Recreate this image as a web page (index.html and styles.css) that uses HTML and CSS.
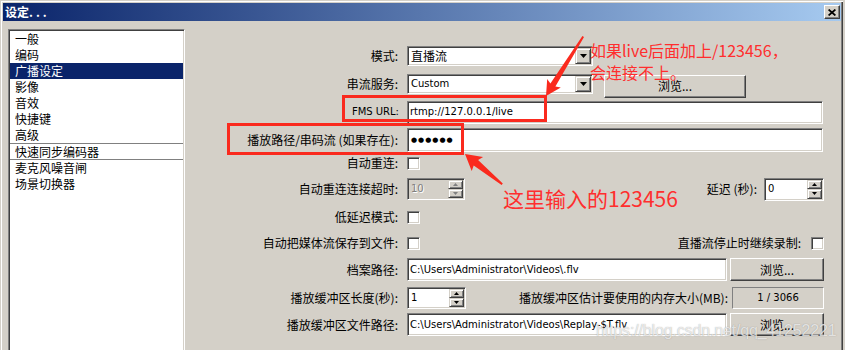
FILE: index.html
```html
<!DOCTYPE html>
<html lang="zh-CN">
<head>
<meta charset="utf-8">
<title>设定</title>
<link rel="stylesheet" href="styles.css">
</head>
<body>
<div class="window">
  <div class="titlebar">
    <span class="title">设定<span class="dots">...</span></span>
    <span class="close"><svg width="8" height="7" viewBox="0 0 8 7"><path d="M0.6 0.5 L7.4 6.5 M7.4 0.5 L0.6 6.5" stroke="#000" stroke-width="1.7"/></svg></span>
  </div>
  <div class="body">
    <div class="list">
      <div class="item">一般</div>
      <div class="item">编码</div>
      <div class="item sel">广播设定</div>
      <div class="item">影像</div>
      <div class="item">音效</div>
      <div class="item">快捷键</div>
      <div class="item">高级</div>
      <div class="item grp">快速同步编码器</div>
      <div class="item">麦克风噪音闸</div>
      <div class="item">场景切换器</div>
    </div>

    <div class="form">
      <div class="row h28">
        <div class="lbl">模式:</div>
        <div class="ctl">
          <div class="combo"><span class="cjk">直播流</span><span class="dd"><svg width="7" height="4" viewBox="0 0 7 4"><path d="M0 0h7L3.5 4z" fill="#000"/></svg></span></div>
        </div>
      </div>

      <div class="row h28">
        <div class="lbl">串流服务:</div>
        <div class="ctl">
          <div class="combo"><span class="lat">Custom</span><span class="dd"><svg width="7" height="4" viewBox="0 0 7 4"><path d="M0 0h7L3.5 4z" fill="#000"/></svg></span></div>
          <div class="btn btn-top w142">浏览...</div>
        </div>
      </div>

      <div class="row h28">
        <div class="lbl lat-lbl">FMS URL:</div>
        <div class="ctl">
          <div class="field w416"><span class="lat">rtmp://127.0.0.1/live</span></div>
        </div>
      </div>

      <div class="row h28">
        <div class="lbl">播放路径/串码流 (如果存在):</div>
        <div class="ctl">
          <div class="field w416 h24"><span class="pw">●●●●●●</span></div>
        </div>
      </div>

      <div class="row h18">
        <div class="lbl">自动重连:</div>
        <div class="ctl"><span class="cb"></span></div>
      </div>

      <div class="row h34">
        <div class="lbl">自动重连连接超时:</div>
        <div class="ctl">
          <div class="spin off w58"><span class="lat">10</span>
            <span class="sbs">
              <span class="sbtn"><svg width="5" height="3" viewBox="0 0 5 3"><path d="M0 3h5L2.5 0z" fill="#808080"/></svg></span>
              <span class="sbtn"><svg width="5" height="3" viewBox="0 0 5 3"><path d="M0 0h5L2.5 3z" fill="#808080"/></svg></span>
            </span>
          </div>
          <div class="lbl-r gap7">延迟 (秒):</div>
          <div class="spin w60 h23"><span class="lat">0</span>
            <span class="sbs">
              <span class="sbtn"><svg width="5" height="3" viewBox="0 0 5 3"><path d="M0 3h5L2.5 0z" fill="#000"/></svg></span>
              <span class="sbtn"><svg width="5" height="3" viewBox="0 0 5 3"><path d="M0 0h5L2.5 3z" fill="#000"/></svg></span>
            </span>
          </div>
        </div>
      </div>

      <div class="row h22">
        <div class="lbl">低延迟模式:</div>
        <div class="ctl"><span class="cb"></span></div>
      </div>

      <div class="row h30">
        <div class="lbl">自动把媒体流保存到文件:</div>
        <div class="ctl">
          <span class="cb"></span>
          <div class="lbl-r gap10">直播流停止时继续录制:</div>
          <span class="cb"></span>
        </div>
      </div>

      <div class="row h23">
        <div class="lbl">档案路径:</div>
        <div class="ctl">
          <div class="field w320"><span class="lat">C:\Users\Administrator\Videos\.flv</span></div>
          <div class="btn w94 ml3">浏览...</div>
        </div>
      </div>

      <div class="row h34">
        <div class="lbl">播放缓冲区长度(秒):</div>
        <div class="ctl">
          <div class="spin w59"><span class="lat">1</span>
            <span class="sbs">
              <span class="sbtn"><svg width="5" height="3" viewBox="0 0 5 3"><path d="M0 3h5L2.5 0z" fill="#000"/></svg></span>
              <span class="sbtn"><svg width="5" height="3" viewBox="0 0 5 3"><path d="M0 0h5L2.5 3z" fill="#000"/></svg></span>
            </span>
          </div>
          <div class="lbl-r gap4">播放缓冲区估计要使用的内存大小(MB):</div>
          <div class="memo"><span class="lat">1 / 3066</span></div>
        </div>
      </div>

      <div class="row h19">
        <div class="lbl">播放缓冲区文件路径:</div>
        <div class="ctl">
          <div class="field w320"><span class="lat">C:\Users\Administrator\Videos\Replay-$T.flv</span></div>
          <div class="btn w94 ml3">浏览...</div>
        </div>
      </div>
    </div>
  </div>
</div>

<svg class="marks" width="845" height="350" viewBox="0 0 845 350">
  <rect x="343.5" y="96.5" width="202" height="24" fill="none" stroke="#fa2a1e" stroke-width="3"/>
  <rect x="228.5" y="124.5" width="234" height="29" fill="none" stroke="#fa2a1e" stroke-width="3"/>
  <polygon fill="#fa2a1e" points="582.4,36.1 584.0,37.1 555.4,86.6 560.8,87.6 546,96 547.2,79.0 550.4,83.4"/>
  <polygon fill="#fa2a1e" points="501.6,185.1 502.8,183.5 478.1,160.1 483.1,157.1 465,154 471.7,171.1 473.7,165.5"/>
</svg>
<div class="note n1">如果live后面加上/123456，<br>会连接不上。</div>
<div class="note n2">这里输入的123456</div>
<div class="wm">https://blog.csdn.net/qq_41252221</div>
</body>
</html>
```

FILE: styles.css
```css
html, body {
  margin: 0;
  padding: 0;
  width: 845px;
  height: 350px;
  overflow: hidden;
  background: #d4d0c8;
}
body {
  position: relative;
  font-family: "Noto Sans CJK SC", sans-serif;
  font-size: 12px;
  line-height: 14px;
  color: #000;
}

.window {
  width: 843px;
  height: 350px;
  box-sizing: border-box;
  padding: 3px 2px 0 3px;
  background: #d4d0c8;
  box-shadow: inset 1px 1px 0 #d4d0c8, inset 2px 2px 0 #fff, inset -1px 0 0 #404040, inset -2px 0 0 #808080;
  display: flex;
  flex-direction: column;
}

.titlebar {
  height: 18px;
  flex: none;
  background: linear-gradient(to right, #0a246a, #a6caf0);
  display: flex;
  align-items: center;
  justify-content: space-between;
}
.title {
  color: #fff;
  font-weight: bold;
  padding-left: 2px;
  line-height: 18px;
}
.dots { letter-spacing: 3px; }
.close {
  width: 16px;
  height: 14px;
  box-sizing: border-box;
  margin-right: 1px;
  background: #d4d0c8;
  border: 1px solid;
  border-color: #fff #404040 #404040 #fff;
  box-shadow: inset -1px -1px 0 #808080;
  display: flex;
  align-items: center;
  justify-content: center;
}
.close svg { display: block; }

.body {
  flex: 1;
  display: flex;
  padding: 8px 0 0 5px;
  overflow: hidden;
}

.list {
  width: 177px;
  height: 340px;
  flex: none;
  box-sizing: border-box;
  background: #fff;
  border: 1px solid;
  border-color: #808080 #fff #fff #808080;
  box-shadow: inset 1px 1px 0 #404040, inset -1px -1px 0 #d4d0c8;
  padding: 1px;
}
.item {
  height: 16px;
  line-height: 16px;
  padding-left: 5px;
  white-space: nowrap;
}
.item.sel { background: #0a246a; color: #fff; }
.item.grp {
  height: 15px;
  line-height: 15px;
  border-top: 1px solid #808080;
  border-bottom: 1px solid #808080;
}

.form {
  margin-top: 13px;
  flex: none;
}
.row {
  display: flex;
  align-items: center;
}
.h28 { height: 28px; }
.h18 { height: 18px; }
.h34 { height: 34px; }
.h22 { height: 22px; }
.h30 { height: 30px; }
.h23 { height: 23px; }
.h19 { height: 19px; }

.lbl {
  width: 214px;
  flex: none;
  box-sizing: border-box;
  padding-right: 1px;
  text-align: right;
  white-space: nowrap;
}
.lat-lbl {
  font-family: "DejaVu Sans", sans-serif;
  font-size: 10px;
  padding-right: 0;
}
.ctl {
  margin-left: 8px;
  width: 417px;
  flex: none;
  display: flex;
  align-items: center;
}
.lbl-r {
  margin-left: auto;
  white-space: nowrap;
}
.gap7 { margin-right: 7px; }
.gap10 { margin-right: 10px; }
.gap4 { margin-right: 4px; }

.lat {
  font-family: "DejaVu Sans", sans-serif;
  font-size: 10px;
}
.cjk {
  font-family: "Noto Sans CJK SC", sans-serif;
  font-size: 12px;
}

.combo, .field, .spin {
  box-sizing: border-box;
  background: #fff;
  border: 1px solid;
  border-color: #808080 #fff #fff #808080;
  box-shadow: inset 1px 1px 0 #404040, inset -1px -1px 0 #d4d0c8;
  display: flex;
  align-items: center;
  white-space: nowrap;
  overflow: hidden;
}
.combo {
  width: 186px;
  height: 20px;
  padding: 0 1px 0 3px;
}
.dd {
  width: 16px;
  height: 16px;
  margin-left: auto;
  box-sizing: border-box;
  background: #d4d0c8;
  border: 1px solid;
  border-color: #d4d0c8 #404040 #404040 #d4d0c8;
  box-shadow: inset 1px 1px 0 #fff, inset -1px -1px 0 #808080;
  display: flex;
  align-items: center;
  justify-content: center;
}
.dd svg, .sbtn svg { display: block; }

.field {
  height: 23px;
  padding-left: 2px;
}
.field.h24 { height: 24px; }
.w416 { width: 416px; }
.w320 { width: 320px; }

.pw {
  font-family: "DejaVu Sans", sans-serif;
  font-size: 7px;
  letter-spacing: 1px;
  padding-left: 1px;
}

.spin {
  height: 22px;
  padding: 1px 1px 1px 3px;
}
.spin.h23 { height: 23px; }
.spin.off { background: #d4d0c8; }
.spin.off .lat { color: #808080; text-shadow: 1px 1px 0 #fff; }
.w58 { width: 58px; }
.w59 { width: 59px; }
.w60 { width: 60px; }
.sbs {
  margin-left: auto;
  width: 15px;
  align-self: stretch;
  display: flex;
  flex-direction: column;
}
.sbtn {
  flex: 1;
  box-sizing: border-box;
  background: #d4d0c8;
  border: 1px solid;
  border-color: #d4d0c8 #404040 #404040 #d4d0c8;
  box-shadow: inset 1px 1px 0 #fff, inset -1px -1px 0 #808080;
  display: flex;
  align-items: center;
  justify-content: center;
}

.cb {
  width: 13px;
  height: 13px;
  flex: none;
  box-sizing: border-box;
  background: #fff;
  border: 1px solid;
  border-color: #808080 #fff #fff #808080;
  box-shadow: inset 1px 1px 0 #404040, inset -1px -1px 0 #d4d0c8;
}

.btn {
  height: 23px;
  box-sizing: border-box;
  background: #d4d0c8;
  border: 1px solid;
  border-color: #fff #404040 #404040 #fff;
  box-shadow: inset -1px -1px 0 #808080;
  display: flex;
  align-items: center;
  justify-content: center;
  white-space: nowrap;
}
.btn-top {
  align-self: flex-start;
  margin-top: 4px;
  margin-left: 11px;
}
.w142 { width: 142px; }
.w94 { width: 94px; }
.ml3 { margin-left: 3px; }

.memo {
  width: 92px;
  height: 22px;
  box-sizing: border-box;
  border: 1px solid;
  border-color: #808080 #fff #fff #808080;
  display: flex;
  align-items: center;
  justify-content: center;
}

.marks {
  position: absolute;
  left: 0;
  top: 0;
  pointer-events: none;
}
.note {
  position: absolute;
  color: #ff2e2e;
  font-family: "Noto Sans CJK SC", sans-serif;
  white-space: nowrap;
}
.n1 {
  left: 590px;
  top: 39px;
  font-size: 16px;
  line-height: 22px;
}
.n2 {
  left: 503px;
  top: 186px;
  font-size: 21px;
  line-height: 24px;
}
.wm {
  position: absolute;
  left: 596px;
  top: 322px;
  font-family: "Liberation Sans", sans-serif;
  font-size: 16px;
  line-height: 18px;
  letter-spacing: -0.15px;
  color: rgba(255, 255, 255, 0.72);
  text-shadow: 0 0 1px rgba(90, 90, 90, 0.55);
  white-space: nowrap;
}
```
